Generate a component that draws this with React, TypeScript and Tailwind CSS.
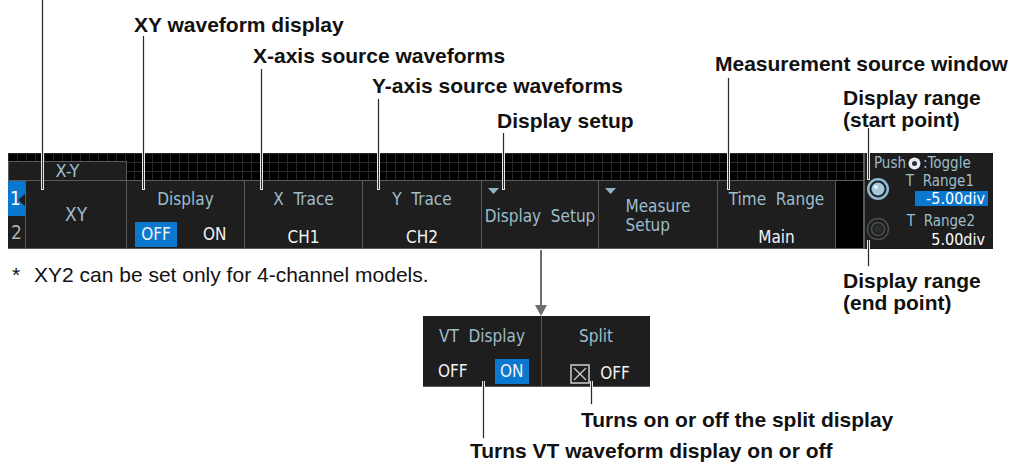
import React from "react";

const ui = "font-['Liberation_Sans_Narrow','DejaVu_Sans_Condensed','Roboto',sans-serif]";
const lbl = "text-[#9dbdcc]";

function VLine({ x, y1, y2 }: { x: number; y1: number; y2: number }) {
  return (
    <div
      className="absolute w-[3px] bg-[#e6e6e6] flex justify-center"
      style={{ left: x - 1, top: y1, height: y2 - y1 + 1 }}
    >
      <div className="w-px h-[calc(100%-1px)] bg-[#2a2a2a]" />
    </div>
  );
}

function Label({ x, y, children }: { x: number; y: number; children: React.ReactNode }) {
  return (
    <div
      className="absolute whitespace-nowrap font-bold text-[21px] leading-[22px] text-[#111]"
      style={{ left: x, top: y }}
    >
      {children}
    </div>
  );
}

function Tri() {
  return (
    <svg width="11" height="6" viewBox="0 0 11 6" className="absolute left-[6px] top-[7px]">
      <polygon points="0,0 11,0 5.5,6" fill="#8fb4ca" />
    </svg>
  );
}

function Knob({ on }: { on: boolean }) {
  return on ? (
    <svg width="24" height="24" viewBox="0 0 24 24">
      <circle cx="12" cy="12" r="11" fill="#8fb8cf" />
      <circle cx="12" cy="12" r="8.5" fill="#1c2328" />
      <circle cx="12" cy="12" r="6.5" fill="#a4c8da" />
      <circle cx="10" cy="10" r="2" fill="#e8f2f7" />
    </svg>
  ) : (
    <svg width="24" height="24" viewBox="0 0 24 24">
      <circle cx="12" cy="12" r="10.5" fill="none" stroke="#4a4f52" strokeWidth="1.5" />
      <circle cx="12" cy="12" r="6.5" fill="none" stroke="#4a4f52" strokeWidth="1.5" />
      <circle cx="12" cy="12" r="4" fill="#2a2e30" />
    </svg>
  );
}

export default function App() {
  return (
    <div className="relative w-[1022px] h-[466px] bg-white overflow-hidden font-['Liberation_Sans',Arial,sans-serif]">
      <div className="pt-[153px] pl-[8px]">
        {/* main bar */}
        <div className={`flex ${ui}`}>
          <div className="w-[855px] h-[96px] bg-black flex flex-col">
            <div className="h-[27px] flex items-end bg-[linear-gradient(to_right,#282828_1px,transparent_1px),linear-gradient(to_bottom,#282828_1px,transparent_1px)] bg-[size:9px_9px]">
              <div className={`w-[119px] h-[19px] bg-[#1e1e1e] border border-b-0 border-[#5a5a5a] flex items-center justify-center text-[18px] leading-none ${lbl}`}>
                X-Y
              </div>
            </div>
            <div className="flex h-[69px] border-t border-b border-[#5a5a5a]">
              {/* channel numbers */}
              <div className="w-[18px] flex flex-col border-r border-[#5a5a5a] bg-[#1e1e1e]">
                <div className="relative h-[35px] bg-[#0b78d0] text-white text-[19px] flex items-center justify-center pr-[2px]">
                  1
                  <svg width="7" height="12" viewBox="0 0 7 12" className="absolute right-0 top-[13px]">
                    <polygon points="7,0 0,6 7,12" fill="#1e1e1e" />
                  </svg>
                </div>
                <div className="flex-1 text-[#b0b0b0] text-[19px] flex items-center justify-center">2</div>
              </div>
              {/* XY */}
              <div className={`w-[101px] bg-[#1e1e1e] border-r border-[#5a5a5a] flex items-center justify-center text-[19px] ${lbl}`}>
                XY
              </div>
              {/* Display */}
              <div className="w-[118px] bg-[#1e1e1e] border-r border-[#5a5a5a] flex flex-col items-center">
                <div className={`mt-[8px] text-[17px] leading-[20px] ${lbl}`}>Display</div>
                <div className="mt-[13px] w-full flex items-center text-[17px] text-[#f2f2f2] pl-[8px]">
                  <div className="w-[42px] h-[25px] bg-[#0b78d0] flex items-center justify-center">OFF</div>
                  <div className="ml-[26px]">ON</div>
                </div>
              </div>
              {/* X Trace */}
              <div className="w-[118px] bg-[#1e1e1e] border-r border-[#5a5a5a] flex flex-col items-center">
                <div className={`mt-[8px] text-[17px] leading-[20px] whitespace-pre ${lbl}`}>X  Trace</div>
                <div className="mt-[18px] text-[17px] leading-[20px] text-[#f2f2f2]">CH1</div>
              </div>
              {/* Y Trace */}
              <div className="w-[119px] bg-[#1e1e1e] border-r border-[#5a5a5a] flex flex-col items-center">
                <div className={`mt-[8px] text-[17px] leading-[20px] whitespace-pre ${lbl}`}>Y  Trace</div>
                <div className="mt-[18px] text-[17px] leading-[20px] text-[#f2f2f2]">CH2</div>
              </div>
              {/* Display Setup */}
              <div className="relative w-[117px] bg-[#1e1e1e] border-r border-[#5a5a5a] flex items-center justify-center">
                <Tri />
                <div className={`mt-[2px] text-[17px] leading-[20px] whitespace-pre ${lbl}`}>Display  Setup</div>
              </div>
              {/* Measure Setup */}
              <div className="relative w-[119px] bg-[#1e1e1e] border-r border-[#5a5a5a] flex items-center justify-center">
                <Tri />
                <div className={`mt-[2px] text-[17px] leading-[19px] ${lbl}`}>
                  Measure
                  <br />
                  Setup
                </div>
              </div>
              {/* Time Range */}
              <div className="w-[118px] bg-[#1e1e1e] border-r border-[#5a5a5a] flex flex-col items-center">
                <div className={`mt-[8px] text-[17px] leading-[20px] whitespace-pre ${lbl}`}>Time  Range</div>
                <div className="mt-[18px] text-[17px] leading-[20px] text-[#f2f2f2]">Main</div>
              </div>
              <div className="flex-1 bg-black" />
            </div>
          </div>
          {/* right panel */}
          <div className="w-[130px] h-[96px] bg-[#1e1e1e] border-l-2 border-[#5a5a5a] flex flex-col pl-[1px] pr-[5px]">
            <div className={`mt-[3px] h-[15px] flex items-center text-[15px] leading-[15px] pl-[8px] ${lbl}`}>
              Push
              <svg width="13" height="13" viewBox="0 0 13 13" className="mx-[2px]">
                <circle cx="6.5" cy="6.5" r="6" fill="#e6eef2" />
                <circle cx="6.5" cy="6.5" r="2.5" fill="#2a3034" />
              </svg>
              :Toggle
            </div>
            <div className="flex mt-[3px]">
              <div className="mt-[3px]">
                <Knob on />
              </div>
              <div className="flex-1 flex flex-col items-end">
                <div className={`h-[15px] text-[15px] leading-[15px] whitespace-pre pr-[14px] ${lbl}`}>T  Range1</div>
                <div className="mt-[2px] h-[15px] w-[73px] bg-[#0b78d0] text-white text-[16px] leading-[15px] text-right pr-[3px]">-5.00div</div>
              </div>
            </div>
            <div className="flex mt-[8px]">
              <div className="mt-[3px]">
                <Knob on={false} />
              </div>
              <div className="flex-1 flex flex-col items-end">
                <div className={`h-[15px] text-[15px] leading-[15px] whitespace-pre pr-[13px] ${lbl}`}>T  Range2</div>
                <div className="mt-[3px] h-[15px] text-white text-[16px] leading-[15px] pr-[3px]">5.00div</div>
              </div>
            </div>
          </div>
        </div>

        {/* footnote */}
        <div className="mt-[15px] ml-[4px] flex text-[21px] leading-[22px] text-[#111]">
          <span className="w-[22px]">*</span>
          <span>XY2 can be set only for 4-channel models.</span>
        </div>

        {/* sub panel */}
        <div className={`mt-[30px] ml-[415px] w-[227px] h-[71px] bg-[#1e1e1e] border-b border-[#5a5a5a] flex ${ui}`}>
          <div className="w-[119px] border-r border-[#5a5a5a] flex flex-col items-center">
            <div className={`mt-[10px] text-[17px] leading-[20px] whitespace-pre ${lbl}`}>VT  Display</div>
            <div className="mt-[13px] w-full flex items-center text-[17px] text-[#f2f2f2] pl-[15px]">
              <div>OFF</div>
              <div className="ml-[27px] w-[34px] h-[25px] bg-[#0b78d0] flex items-center justify-center">ON</div>
            </div>
          </div>
          <div className="flex-1 flex flex-col items-center">
            <div className={`mt-[10px] text-[17px] leading-[20px] ${lbl}`}>Split</div>
            <div className="mt-[15px] flex items-center text-[17px] text-[#f2f2f2] ml-[8px]">
              <svg width="20" height="20" viewBox="0 0 20 20">
                <rect x="1" y="1" width="18" height="18" fill="none" stroke="#cfcfcf" strokeWidth="1.5" />
                <line x1="4" y1="4" x2="16" y2="16" stroke="#cfcfcf" strokeWidth="1.3" />
                <line x1="16" y1="4" x2="4" y2="16" stroke="#cfcfcf" strokeWidth="1.3" />
              </svg>
              <span className="ml-[10px]">OFF</span>
            </div>
          </div>
        </div>
      </div>

      {/* annotations */}
      <VLine x={42} y1={0} y2={189} />
      <VLine x={143} y1={36} y2={189} />
      <VLine x={261} y1={69} y2={189} />
      <VLine x={378} y1={99} y2={189} />
      <VLine x={503} y1={133} y2={189} />
      <VLine x={728} y1={78} y2={189} />
      <VLine x={868} y1={128} y2={179} />
      <VLine x={868} y1={240} y2={266} />
      <VLine x={483} y1={381} y2={438} />
      <VLine x={591} y1={381} y2={404} />

      {/* arrow */}
      <div className="absolute left-[540px] top-[250px] w-[2px] h-[57px] bg-[#6e6e6e]" />
      <svg className="absolute left-[535px] top-[305px]" width="12" height="11" viewBox="0 0 12 11">
        <polygon points="0,0 12,0 6,11" fill="#6e6e6e" />
      </svg>

      <Label x={134} y={14}>XY waveform display</Label>
      <Label x={253} y={45}>X-axis source waveforms</Label>
      <Label x={372} y={75}>Y-axis source waveforms</Label>
      <Label x={497} y={110}>Display setup</Label>
      <Label x={715} y={53}>Measurement source window</Label>
      <div className="absolute left-[843px] top-[87px] font-bold text-[21px] leading-[22px] text-[#111] whitespace-nowrap">
        Display range
        <br />
        (start point)
      </div>
      <div className="absolute left-[843px] top-[270px] font-bold text-[21px] leading-[22px] text-[#111] whitespace-nowrap">
        Display range
        <br />
        (end point)
      </div>
      <Label x={581} y={409}>Turns on or off the split display</Label>
      <Label x={470} y={440}>Turns VT waveform display on or off</Label>
    </div>
  );
}
